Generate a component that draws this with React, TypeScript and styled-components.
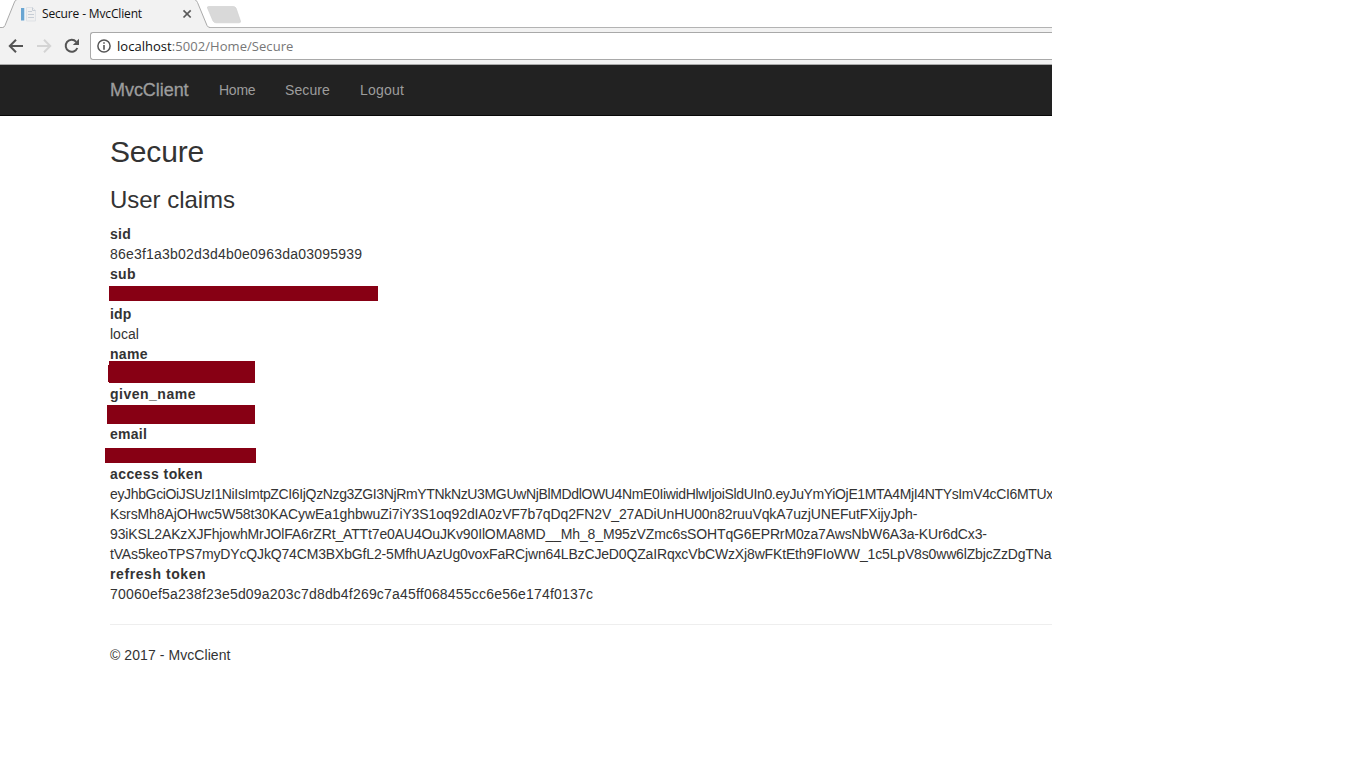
import React from "react";
import styled, { createGlobalStyle } from "styled-components";

const GlobalStyle = createGlobalStyle`
  * { box-sizing: border-box; }
  body { margin: 0; background: #fff; }
`;

const Screen = styled.div`
  width: 1364px;
  height: 768px;
  overflow: hidden;
  background: #fff;
`;

const Browser = styled.div`
  width: 1052px;
  height: 768px;
  overflow: hidden;
  font-family: "Liberation Sans", Arial, sans-serif;
  font-size: 14px;
  line-height: 20px;
  color: #333;
`;

const Label = styled.span<{ $track?: number }>`
  letter-spacing: ${(p) => p.$track ?? 0}px;
  white-space: nowrap;
`;

const TabStrip = styled.div`
  position: relative;
  height: 28px;
  border-bottom: 1px solid #b3b3b3;
`;

const TabShape = styled.svg`
  position: absolute;
  left: 0;
  top: 0;
`;

const TabContent = styled.div`
  position: relative;
  display: flex;
  align-items: center;
  height: 28px;
  width: 196px;
  padding: 0 4px 0 20px;
  font-family: "Open Sans", "Noto Sans", sans-serif;
  font-size: 12px;
  color: #111;
`;

const TabTitle = styled(Label)`
  flex: 1;
  margin-left: 6px;
`;

const Toolbar = styled.div`
  display: flex;
  align-items: center;
  height: 37px;
  padding-left: 8px;
  background: #f2f2f2;
  border-bottom: 1px solid #aaa;
`;

const NavIcon = styled.svg<{ $gap: number }>`
  flex: none;
  margin-right: ${(p) => p.$gap}px;
`;

const Omnibox = styled.div`
  display: flex;
  align-items: center;
  flex: 1;
  height: 28px;
  padding-left: 6px;
  background: #fff;
  border: 1px solid #a9a9a9;
  border-right: 0;
  border-radius: 3px 0 0 3px;
  font-family: "Open Sans", "Noto Sans", sans-serif;
  font-size: 13px;
  color: #111;
`;

const UrlPath = styled(Label)`
  color: #777;
`;

const Navbar = styled.nav`
  display: flex;
  height: 51px;
  padding: 15px 0 15px 110px;
  background: #222;
  border-bottom: 1px solid #080808;
  color: #9d9d9d;
`;

const Brand = styled(Label)`
  width: 109px;
  font-size: 18px;
  -webkit-text-stroke: 0.3px #9d9d9d;
`;

const NavLink = styled(Label)<{ $width: number }>`
  width: ${(p) => p.$width}px;
`;

const Page = styled.main`
  padding: 19px 0 0 110px;
`;

const Title = styled.h2`
  margin: 0 0 19px;
  font-size: 30px;
  font-weight: 400;
  line-height: 33px;
`;

const Subtitle = styled.h3`
  margin: 0 0 11px;
  font-size: 24px;
  font-weight: 400;
  line-height: 26px;
`;

const Claims = styled.dl`
  margin: 0 0 20px;
`;

const Term = styled.dt`
  height: 20px;
  font-weight: 700;
`;

const Value = styled.dd`
  position: relative;
  min-height: 20px;
  margin: 0;
`;

const Redaction = styled.span<{ $x: number; $y: number; $w: number; $h: number }>`
  position: absolute;
  left: ${(p) => p.$x}px;
  top: ${(p) => p.$y}px;
  width: ${(p) => p.$w}px;
  height: ${(p) => p.$h}px;
  background: #870014;
`;

const TokenLine = styled.div`
  height: 20px;
  white-space: nowrap;
`;

const Rule = styled.hr`
  height: 1px;
  margin: 0 0 20px;
  border: 0;
  background: #eee;
`;

const Footer = styled.footer`
  height: 20px;
`;

const tokenLines: { text: string; track: number }[] = [
  { text: "eyJhbGciOiJSUzI1NiIsImtpZCI6IjQzNzg3ZGI3NjRmYTNkNzU3MGUwNjBlMDdlOWU4NmE0IiwidHlwIjoiSldUIn0.eyJuYmYiOjE1MTA4MjI4NTYsImV4cCI6MTUx", track: -0.352 },
  { text: "KsrsMh8AjOHwc5W58t30KACywEa1ghbwuZi7iY3S1oq92dIA0zVF7b7qDq2FN2V_27ADiUnHU00n82ruuVqkA7uzjUNEFutFXijyJph-", track: -0.11 },
  { text: "93iKSL2AKzXJFhjowhMrJOlFA6rZRt_ATTt7e0AU4OuJKv90IlOMA8MD__Mh_8_M95zVZmc6sSOHTqG6EPRrM0za7AwsNbW6A3a-KUr6dCx3-", track: -0.138 },
  { text: "tVAs5keoTPS7myDYcQJkQ74CM3BXbGfL2-5MfhUAzUg0voxFaRCjwn64LBzCJeD0QZaIRqxcVbCWzXj8wFKtEth9FIoWW_1c5LpV8s0ww6lZbjcZzDgTNa", track: -0.157 },
];

export default function App() {
  return (
    <>
      <GlobalStyle />
      <Screen>
        <Browser>
          <TabStrip>
            <TabShape width="250" height="28" viewBox="0 0 250 28">
              <path d="M0 27.500H3.500L5 26 15 1.500 16.500 0H195L197 2 207.500 26 209.500 27.500V28H0Z" fill="#f2f2f2" />
              <path d="M0 27.500H2.500Q4 27.500 5 25.500L14.500 2Q15.200 0 17 -.5M194.500 -.5Q196.500 0 197.500 2.500L207 25.500Q208 27.500 210 27.500" fill="none" stroke="#aaa" />
              <path d="M208.500 6.500H233.500Q235 6.500 236 8L240.500 21Q241 22.800 239 22.800H216Q214 22.800 213 21L207.500 8Q207 6.500 208.500 6.500Z" fill="#d9d9d9" stroke="#cfcfcf" strokeWidth=".6" />
            </TabShape>
            <TabContent>
              <svg width="16" height="16" viewBox="0 0 16 16">
                <path d="M1 2H4V14.500H1Z" fill="#68a5d2" />
                <path d="M4 2H5V14.500H4Z" fill="#c9dff0" />
                <path d="M6.500 1.500H12.500L15.500 4.500V15H6.500Z" fill="#f0f0f0" stroke="#dfe2e6" />
                <path d="M8 5.500H12M8 8.500H14M8 11.500H14M12.500 1.500V4.500H15.500" stroke="#c6cdd5" fill="none" />
              </svg>
              <TabTitle $track={-0.15}>Secure - MvcClient</TabTitle>
              <svg width="10" height="10" viewBox="0 0 10 10">
                <path d="M1.500 1.300L8.700 8.500M8.700 1.300L1.500 8.500" stroke="#5a5a5a" strokeWidth="1.700" />
              </svg>
            </TabContent>
          </TabStrip>
          <Toolbar>
            <NavIcon $gap={12} width="16" height="16" viewBox="0 0 16 16">
              <path d="M15 8H2.500M8 1.800L1.800 8 8 14.200" fill="none" stroke="#555" strokeWidth="2" />
            </NavIcon>
            <NavIcon $gap={12} width="16" height="16" viewBox="0 0 16 16">
              <path d="M1 8H13.500M8 1.800L14.200 8 8 14.200" fill="none" stroke="#d4d4d4" strokeWidth="2" />
            </NavIcon>
            <NavIcon $gap={10} width="16" height="16" viewBox="0 0 16 16">
              <path d="M13.300 10A6 6 0 1 1 12.200 3.800" fill="none" stroke="#555" strokeWidth="2" />
              <path d="M15 .8V7H8.800Z" fill="#555" />
            </NavIcon>
            <Omnibox>
              <NavIcon $gap={6} width="14" height="14" viewBox="0 0 14 14">
                <circle cx="7" cy="7" r="6.100" fill="none" stroke="#555" strokeWidth="1.500" />
                <path d="M6.200 3.200H7.800V4.800H6.200ZM6.200 6H7.800V10.800H6.200Z" fill="#555" />
              </NavIcon>
              <Label $track={0.03}>localhost</Label>
              <UrlPath $track={0.06}>:5002/Home/Secure</UrlPath>
            </Omnibox>
          </Toolbar>
          <Navbar>
            <Brand $track={-0.05}>MvcClient</Brand>
            <NavLink $width={66} $track={-0.25}>Home</NavLink>
            <NavLink $width={75} $track={0.1}>Secure</NavLink>
            <NavLink $width={60} $track={0.2}>Logout</NavLink>
          </Navbar>
          <Page>
            <Title><Label $track={-0.18}>Secure</Label></Title>
            <Subtitle><Label $track={-0.03}>User claims</Label></Subtitle>
            <Claims>
              <Term><Label $track={0.3}>sid</Label></Term>
              <Value><Label $track={0.215}>86e3f1a3b02d3d4b0e0963da03095939</Label></Value>
              <Term><Label $track={0.3}>sub</Label></Term>
              <Value><Redaction $x={-1} $y={2} $w={269} $h={15} /></Value>
              <Term><Label $track={0.2}>idp</Label></Term>
              <Value><Label>local</Label></Value>
              <Term><Label $track={0.3}>name</Label></Term>
              <Value>
                <Redaction $x={-1} $y={-3} $w={146} $h={22} />
                <Redaction $x={-2} $y={1} $w={2} $h={17} />
              </Value>
              <Term><Label $track={0.5}>given_name</Label></Term>
              <Value><Redaction $x={-3} $y={1} $w={148} $h={19} /></Value>
              <Term><Label $track={0.25}>email</Label></Term>
              <Value><Redaction $x={-5} $y={4} $w={151} $h={15} /></Value>
              <Term><Label $track={0.42}>access token</Label></Term>
              <Value>
                {tokenLines.map((line) => (
                  <TokenLine key={line.text}>
                    <Label $track={line.track}>{line.text}</Label>
                  </TokenLine>
                ))}
              </Value>
              <Term><Label $track={0.58}>refresh token</Label></Term>
              <Value><Label $track={0.195}>70060ef5a238f23e5d09a203c7d8db4f269c7a45ff068455cc6e56e174f0137c</Label></Value>
            </Claims>
            <Rule />
            <Footer><Label $track={0.07}>© 2017 - MvcClient</Label></Footer>
          </Page>
        </Browser>
      </Screen>
    </>
  );
}
